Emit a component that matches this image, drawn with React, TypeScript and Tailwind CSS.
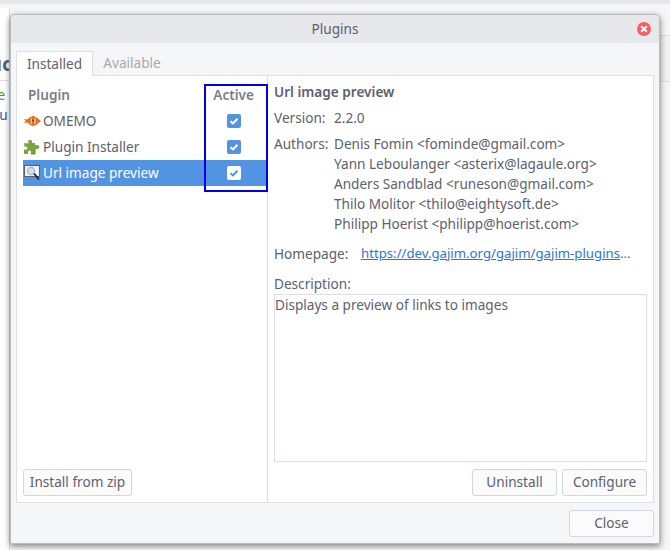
const FONT = "font-['Noto_Sans','Open_Sans',sans-serif]";

function Check({ light }: { light?: boolean }) {
  return (
    <span className={`flex h-[14px] w-[14px] items-center justify-center rounded-[2px] ${light ? "bg-white" : "bg-[#5294e2]"}`}>
      <svg width="10" height="8" viewBox="0 0 10 8" fill="none">
        <path d="M1.500 4.200 L4 6.400 L8.500 1.800" stroke={light ? "#5294e2" : "#fff"} strokeWidth="2" />
      </svg>
    </span>
  );
}

function FishIcon() {
  return (
    <svg width="17" height="12" viewBox="0 0 17 12">
      <path d="M0 4 L3 4.500 L5 3 Q6 1.500 8 1.500 L9 0.500 L10.500 1.500 Q13 2 14.500 4 L17 6 L14.500 8 Q13 10 10.500 10.500 L9 11.500 L8 10.500 Q6 10.500 5 9 L3 7.500 L0 8 L1.500 6 Z" fill="#dc7625" />
      <path d="M7.500 3 L7 9 M11 3 L10.800 9" stroke="#fbe3c8" strokeWidth="1" />
      <circle cx="9.200" cy="5.500" r="0.900" fill="#5a3515" />
    </svg>
  );
}

function PuzzleIcon() {
  return (
    <svg width="16" height="15" viewBox="0 0 16 15">
      <path
        d="M0 3 H4 V1 Q4 0 6 0 Q8 0 8 1 V3 H11 V5 H13 Q15.500 5 15.500 7 Q15.500 9 13 9 H11 V14 H7 V12 Q7 10.500 5.500 10.500 Q4 10.500 4 12 V14 H0 V9.500 H2 Q3.500 9.500 3.500 8 Q3.500 6.500 2 6.500 H0 Z"
        fill="#7aa63f"
      />
      <path d="M0.500 3.500 H4.500 V1 M0.500 3.500 V6.500" stroke="#a9cc6e" strokeWidth="0.800" fill="none" />
      <path d="M11 9 V14 H7" stroke="#4f7a25" strokeWidth="0.800" fill="none" />
    </svg>
  );
}

function PreviewIcon() {
  return (
    <svg width="17" height="16" viewBox="0 0 17 16">
      <rect x="0.500" y="0.500" width="15" height="11" fill="#eef1f6" stroke="#5a5f68" />
      <circle cx="7" cy="6" r="3.700" fill="#cfdff3" stroke="#a3aebb" />
      <path d="M10 8.500 L15 14.500" stroke="#1f1f1f" strokeWidth="1.800" />
    </svg>
  );
}

function Btn({ label, w }: { label: string; w: string }) {
  return (
    <button className={`${w} flex h-[27px] items-center justify-center rounded-[3px] border border-[#cfd6e6] bg-[#fbfbfc] text-[13.600px] text-[#5c616c]`}>
      {label}
    </button>
  );
}

function PluginRow({ icon, label, selected }: { icon: React.ReactNode; label: string; selected?: boolean }) {
  return (
    <div className={`flex h-[26px] items-center pl-[1px] pr-[26px] ${selected ? "bg-[#5294e2] text-white" : "text-[#5c616c]"}`}>
      <span className="flex w-[19px] justify-start">{icon}</span>
      <span className="flex-1">{label}</span>
      <Check light={selected} />
    </div>
  );
}

const AUTHORS = [
  "Denis Fomin <fominde@gmail.com>",
  "Yann Leboulanger <asterix@lagaule.org>",
  "Anders Sandblad <runeson@gmail.com>",
  "Thilo Molitor <thilo@eightysoft.de>",
  "Philipp Hoerist <philipp@hoerist.com>",
];

export default function App() {
  return (
    <div className={`${FONT} relative h-[550px] w-[670px] overflow-hidden bg-[#f5f6f7] text-[13.600px]`}>
      <div className="h-[4px] bg-[#e7e8eb]" />
      {/* app window behind the dialog */}
      <div className="absolute left-0 top-[8px] h-[542px] w-[10px] overflow-hidden border-r border-[#dcdfe3] bg-white">
        <div className="absolute left-[-11px] top-[41px] text-[20px] font-bold text-[#5c616c]">uc</div>
        <div className="absolute left-0 top-[72px] h-px w-full bg-[#dcdfe3]" />
        <div className="absolute left-[-9px] top-[77px] text-[#4e9a06]">se</div>
        <div className="absolute left-[-9px] top-[97px] text-[#2a5db0]">ou</div>
      </div>
      <div className="absolute right-0 top-[35px] h-[47px] w-[10px] border-y border-[#dcdfe3] bg-[#eff0f2]" />

      <div className="absolute left-[10px] top-[14px] flex h-[530px] w-[650px] flex-col overflow-hidden rounded-t-[5px] border border-[#b8babd] bg-[#f5f6f7] shadow-[0_2px_6px_rgba(0,0,0,0.5)]">
        <div className="relative flex h-[28px] shrink-0 items-center justify-center bg-[#e7e8eb] pt-[1px] text-[#5c616c]">
          Plugins
          <span className="absolute right-[8px] top-[7px] flex h-[14px] w-[14px] items-center justify-center rounded-full bg-[#f46067]">
            <svg width="8" height="8" viewBox="0 0 8 8">
              <path d="M1.200 1.200 L6.800 6.800 M6.800 1.200 L1.200 6.800" stroke="#fff" strokeWidth="2" />
            </svg>
          </span>
        </div>

        <div className="flex flex-1 flex-col px-[5px] pt-[8px]">
          <div className="flex h-[24px] shrink-0">
            <div className="z-10 mb-[-1px] flex w-[77px] items-center justify-center rounded-t-[2px] border border-b-0 border-[#dcdfe3] bg-white text-[#5c616c]">
              Installed
            </div>
            <div className="flex w-[78px] items-center justify-center text-[#a6a9af]">Available</div>
          </div>

          <div className="flex h-[428px] shrink-0 border border-[#dcdfe3] bg-white">
            <div className="flex w-[251px] shrink-0 flex-col border-r border-[#dcdfe3] pb-[6px] pl-[6px]">
              <div className="ml-[-6px] flex h-[33px] items-center px-[11px] pt-[5px] font-semibold text-[#7b7e86]">
                <span className="flex-1">Plugin</span>
                <span className="mr-[2px]">Active</span>
              </div>
              <div className="mt-[-1px] flex flex-col">
                <PluginRow icon={<FishIcon />} label="OMEMO" />
                <PluginRow icon={<PuzzleIcon />} label="Plugin Installer" />
                <PluginRow icon={<PreviewIcon />} label="Url image preview" selected />
              </div>
              <div className="mt-auto">
                <Btn label="Install from zip" w="w-[109px]" />
              </div>
            </div>

            <div className="flex min-w-0 flex-1 flex-col p-[6px] text-[#5c616c]">
              <div className="h-[20px] font-semibold leading-[19px]">Url image preview</div>
              <div className="mt-[6px] flex h-[20px] leading-[19px]">
                <span className="w-[60px]">Version:</span>
                <span>2.2.0</span>
              </div>
              <div className="mt-[6px] flex leading-[19px]">
                <span className="w-[60px]">Authors:</span>
                <div className="flex flex-col">
                  {AUTHORS.map((a) => (
                    <div key={a} className="h-[20px] whitespace-nowrap">
                      {a}
                    </div>
                  ))}
                </div>
              </div>
              <div className="mt-[10px] flex h-[20px] leading-[19px]">
                <span className="w-[87px] shrink-0">Homepage:</span>
                <span className="w-[270px] truncate whitespace-nowrap text-[13.200px] text-[#2a76d6] underline">https://dev.gajim.org/gajim/gajim-plugins/wiki/UrlImagePreviewPlugin</span>
              </div>
              <div className="mt-[10px] h-[20px] leading-[19px]">Description:</div>
              <div className="h-[168px] border border-[#dcdfe3] leading-[19px]">Displays a preview of links to images</div>
              <div className="mt-auto flex justify-end gap-[5px]">
                <Btn label="Uninstall" w="w-[85px]" />
                <Btn label="Configure" w="w-[85px]" />
              </div>
            </div>
          </div>

          <div className="flex flex-1 items-center justify-end">
            <Btn label="Close" w="w-[85px]" />
          </div>
        </div>
      </div>

      {/* annotation drawn over the screenshot */}
      <div className="absolute left-[204px] top-[84px] h-[108px] w-[64px] border-2 border-[#0000e6]" />
    </div>
  );
}
